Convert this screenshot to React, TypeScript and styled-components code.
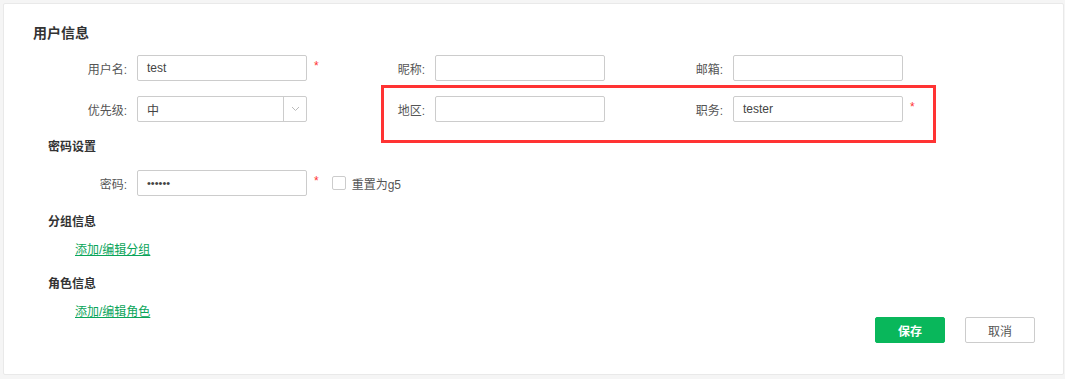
import React from "react";
import styled, { createGlobalStyle } from "styled-components";

const Global = createGlobalStyle`
  html, body { margin: 0; padding: 0; background: #f5f5f5; }
  body { font-family: "Liberation Sans", "Noto Sans CJK SC", sans-serif; font-size: 12px; color: #555; }
  * { box-sizing: border-box; }
`;

const Page = styled.div`
  padding: 3px 1px 4px 3px;
  width: 1065px;
  height: 379px;
`;

const Card = styled.div`
  position: relative;
  background: #fff;
  border: 1px solid #e9e9e9;
  border-radius: 2px;
  height: 372px;
  padding: 19px 0 0 29px;
`;

const MainTitle = styled.div`
  font-size: 14px;
  font-weight: bold;
  color: #333;
  line-height: 20px;
`;

const SubTitle = styled.div<{ $mt: number }>`
  font-size: 12px;
  font-weight: bold;
  color: #333;
  line-height: 20px;
  margin: ${(p) => p.$mt}px 0 0 15px;
`;

const Grid = styled.div`
  position: relative;
  display: grid;
  grid-template-columns: repeat(3, 298px);
  row-gap: 15px;
  margin-top: 12px;
`;

const FieldRow = styled.div<{ $mt?: number }>`
  display: flex;
  align-items: center;
  height: 26px;
  margin-top: ${(p) => p.$mt ?? 0}px;
`;

const Label = styled.label`
  width: 94px;
  text-align: right;
  margin-right: 10px;
  color: #555;
  font-size: 12px;
  white-space: nowrap;
`;

const Input = styled.div`
  width: 170px;
  height: 26px;
  border: 1px solid #ccc;
  border-radius: 2px;
  padding-left: 9px;
  display: flex;
  align-items: center;
  font-size: 12px;
  color: #444;
  background: #fff;
`;

const Password = styled(Input)`
  font-size: 11px;
  padding-bottom: 1px;
`;

const Select = styled.div`
  width: 170px;
  height: 26px;
  border: 1px solid #ccc;
  border-radius: 2px;
  display: flex;
  align-items: stretch;
  font-size: 12px;
  color: #444;
`;

const SelectValue = styled.div`
  flex: 1;
  display: flex;
  align-items: center;
  padding-left: 9px;
`;

const SelectArrow = styled.div`
  width: 23px;
  border-left: 1px solid #ccc;
  display: flex;
  align-items: center;
  justify-content: center;
`;

const Required = styled.span`
  color: #f33;
  font-size: 12px;
  margin-left: 7px;
  margin-top: -5px;
`;

const CheckWrap = styled.div`
  display: flex;
  align-items: center;
  margin-left: 13px;
  gap: 6px;
  font-size: 12px;
  color: #555;
`;

const CheckBox = styled.span`
  width: 14px;
  height: 14px;
  border: 1px solid #ccc;
  border-radius: 2px;
  background: #fff;
  display: inline-block;
`;

const LinkText = styled.a`
  display: block;
  margin: 8px 0 0 42px;
  line-height: 20px;
  font-size: 12px;
  color: #0aa55a;
  text-decoration: underline;
  width: fit-content;
`;

const Bottom = styled.div`
  display: flex;
  justify-content: space-between;
  align-items: flex-start;
  margin-top: 14px;
  padding-right: 28px;
`;

const ButtonRow = styled.div`
  display: flex;
  gap: 20px;
  margin-top: 43px;
`;

const Button = styled.button<{ $primary?: boolean }>`
  width: 70px;
  height: 26px;
  border-radius: 2px;
  font-family: inherit;
  font-size: 12px;
  cursor: pointer;
  border: 1px solid ${(p) => (p.$primary ? "#09b75b" : "#ccc")};
  background: ${(p) => (p.$primary ? "#09b75b" : "#fff")};
  color: ${(p) => (p.$primary ? "#fff" : "#555")};
  font-weight: ${(p) => (p.$primary ? "bold" : "normal")};
`;

const Highlight = styled.div`
  position: absolute;
  left: 348px;
  top: 30px;
  width: 555px;
  height: 58px;
  border: 3px solid #f33;
  pointer-events: none;
`;

const Chevron = () => (
  <svg width="9" height="6" viewBox="0 0 9 6">
    <polyline points="1,1 4.5,4.5 8,1" fill="none" stroke="#bbb" strokeWidth="1" />
  </svg>
);

export default function App() {
  return (
    <>
      <Global />
      <Page>
        <Card>
          <MainTitle>用户信息</MainTitle>
          <Grid>
            <FieldRow>
              <Label>用户名:</Label>
              <Input>test</Input>
              <Required>*</Required>
            </FieldRow>
            <FieldRow>
              <Label>昵称:</Label>
              <Input />
            </FieldRow>
            <FieldRow>
              <Label>邮箱:</Label>
              <Input />
            </FieldRow>
            <FieldRow>
              <Label>优先级:</Label>
              <Select>
                <SelectValue>中</SelectValue>
                <SelectArrow>
                  <Chevron />
                </SelectArrow>
              </Select>
            </FieldRow>
            <FieldRow>
              <Label>地区:</Label>
              <Input />
            </FieldRow>
            <FieldRow>
              <Label>职务:</Label>
              <Input>tester</Input>
              <Required>*</Required>
            </FieldRow>
            <Highlight />
          </Grid>

          <SubTitle $mt={15}>密码设置</SubTitle>
          <FieldRow $mt={13}>
            <Label>密码:</Label>
            <Password>••••••</Password>
            <Required>*</Required>
            <CheckWrap>
              <CheckBox />
              <span>重置为g5</span>
            </CheckWrap>
          </FieldRow>

          <SubTitle $mt={16}>分组信息</SubTitle>
          <LinkText>添加/编辑分组</LinkText>

          <Bottom>
            <div>
              <SubTitle $mt={0}>角色信息</SubTitle>
              <LinkText>添加/编辑角色</LinkText>
            </div>
            <ButtonRow>
              <Button $primary>保存</Button>
              <Button>取消</Button>
            </ButtonRow>
          </Bottom>
        </Card>
      </Page>
    </>
  );
}
